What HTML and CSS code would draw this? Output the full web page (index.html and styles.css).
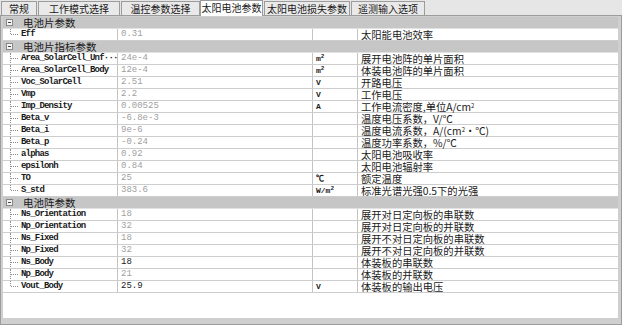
FILE: index.html
```html
<!DOCTYPE html>
<html lang="zh-CN">
<head>
  <meta charset="UTF-8" />
  <title>太阳电池参数</title>
  <link rel="stylesheet" href="styles.css">
</head>
<body>
  <div class="tabs">
    <div class="tab t1">常规</div>
    <div class="tab t2">工作模式选择</div>
    <div class="tab t3">温控参数选择</div>
    <div class="tab t4 active">太阳电池参数</div>
    <div class="tab t5">太阳电池损失参数</div>
    <div class="tab t6">遥测输入选项</div>
  </div>

  <div class="panel">
    <div class="grid">
      <div class="cat"><span class="toggle"></span>电池片参数</div>
      <div class="row last"><div class="name">Eff</div><div class="val">0.31</div><div class="unit"></div><div class="desc">太阳能电池效率</div></div>

      <div class="cat"><span class="toggle"></span>电池片指标参数</div>
      <div class="row"><div class="name">Area_SolarCell_Unf···</div><div class="val">24e-4</div><div class="unit">m<sup>2</sup></div><div class="desc">展开电池阵的单片面积</div></div>
      <div class="row"><div class="name">Area_SolarCell_Body</div><div class="val">12e-4</div><div class="unit">m<sup>2</sup></div><div class="desc">体装电池阵的单片面积</div></div>
      <div class="row"><div class="name">Voc_SolarCell</div><div class="val">2.51</div><div class="unit">V</div><div class="desc">开路电压</div></div>
      <div class="row"><div class="name">Vmp</div><div class="val">2.2</div><div class="unit">V</div><div class="desc">工作电压</div></div>
      <div class="row"><div class="name">Imp_Density</div><div class="val">0.00525</div><div class="unit">A</div><div class="desc">工作电流密度,单位A/cm<sup>2</sup></div></div>
      <div class="row"><div class="name">Beta_v</div><div class="val">-6.8e-3</div><div class="unit"></div><div class="desc">温度电压系数，V/℃</div></div>
      <div class="row"><div class="name">Beta_i</div><div class="val">9e-6</div><div class="unit"></div><div class="desc">温度电流系数，A/(cm<sup>2</sup>•℃)</div></div>
      <div class="row"><div class="name">Beta_p</div><div class="val">-0.24</div><div class="unit"></div><div class="desc">温度功率系数，%/℃</div></div>
      <div class="row"><div class="name">alphas</div><div class="val">0.92</div><div class="unit"></div><div class="desc">太阳电池吸收率</div></div>
      <div class="row"><div class="name">epsilonh</div><div class="val">0.84</div><div class="unit"></div><div class="desc">太阳电池辐射率</div></div>
      <div class="row"><div class="name">TO</div><div class="val">25</div><div class="unit">℃</div><div class="desc">额定温度</div></div>
      <div class="row last"><div class="name">S_std</div><div class="val">383.6</div><div class="unit">W/m<sup>2</sup></div><div class="desc">标准光谱光强0.5下的光强</div></div>

      <div class="cat"><span class="toggle"></span>电池阵参数</div>
      <div class="row"><div class="name">Ns_Orientation</div><div class="val">18</div><div class="unit"></div><div class="desc">展开对日定向板的串联数</div></div>
      <div class="row"><div class="name">Np_Orientation</div><div class="val">32</div><div class="unit"></div><div class="desc">展开对日定向板的并联数</div></div>
      <div class="row"><div class="name">Ns_Fixed</div><div class="val">18</div><div class="unit"></div><div class="desc">展开不对日定向板的串联数</div></div>
      <div class="row"><div class="name">Np_Fixed</div><div class="val">32</div><div class="unit"></div><div class="desc">展开不对日定向板的并联数</div></div>
      <div class="row"><div class="name">Ns_Body</div><div class="val edit">18</div><div class="unit"></div><div class="desc">体装板的串联数</div></div>
      <div class="row"><div class="name">Np_Body</div><div class="val">21</div><div class="unit"></div><div class="desc">体装板的并联数</div></div>
      <div class="row last"><div class="name">Vout_Body</div><div class="val edit">25.9</div><div class="unit">V</div><div class="desc">体装板的输出电压</div></div>
    </div>
  </div>
</body>
</html>
```

FILE: styles.css
```css
body {
  margin: 0;
  width: 622px;
  height: 325px;
  overflow: hidden;
  background: #e6e6e6;
  font-family: "Noto Sans CJK SC", sans-serif;
  color: #1a1a1a;
}

/* tab strip */
.tabs {
  display: flex;
  align-items: flex-end;
  height: 15px;
  padding-left: 1px;
}

.tab {
  box-sizing: border-box;
  height: 14px;
  margin-right: 1px;
  border: 1px solid #9c9c9c;
  border-bottom: none;
  background: #e9e9e9;
  font-size: 10px;
  line-height: 13px;
  text-align: center;
  white-space: nowrap;
}

.t1 { width: 36px; }
.t2 { width: 82px; }
.t3 { width: 79px; }
.t4 { width: 63px; }
.t5 { width: 86px; }
.t6 { width: 74px; }

.tab.active {
  height: 16px;
  margin-bottom: -1px;
  margin-left: -1px;
  background: #fff;
  position: relative;
  z-index: 1;
}

/* panel with the property grid */
.panel {
  box-sizing: border-box;
  height: 310px;
  border: 1px solid #9c9c9c;
  background: #cfcfcf;
  padding: 1px 3px 6px 2px;
}

.grid {
  height: 100%;
  background: #fff;
}

.cat {
  height: 11px;
  line-height: 11px;
  border-bottom: 1px solid #e2e2e2;
  background: #c6c6c6;
  font-size: 10.5px;
  display: flex;
  align-items: center;
}

.toggle {
  box-sizing: border-box;
  width: 7px;
  height: 7px;
  margin: 0 10px 0 3px;
  border: 1px solid #8a8a8a;
  background: #f4f4f4;
  position: relative;
}

.toggle::after {
  content: "";
  position: absolute;
  left: 1px;
  right: 1px;
  top: 2px;
  border-top: 1px solid #444;
}

.row {
  display: grid;
  grid-template-columns: 114px 195px 45px 1fr;
  height: 11px;
  line-height: 11px;
  border-bottom: 1px solid #cdcdcd;
}

.row > div {
  white-space: nowrap;
}

.name {
  position: relative;
  overflow: hidden;
  padding-left: 18px;
  font-family: "Liberation Mono", monospace;
  font-weight: bold;
  font-size: 9px;
  letter-spacing: -0.8px;
}

.name::before {
  content: "";
  position: absolute;
  left: 7px;
  top: 0;
  bottom: -1px;
  border-left: 1px dotted #8c8c8c;
}

.name::after {
  content: "";
  position: absolute;
  left: 8px;
  top: 5px;
  width: 7px;
  border-top: 1px dotted #8c8c8c;
}

.row.last .name::before {
  bottom: 6px;
}

.val,
.unit,
.desc {
  border-left: 1px solid #c4c4c4;
}

.val {
  padding-left: 3px;
  font-family: "Liberation Mono", monospace;
  font-size: 9px;
  color: #a0a0a0;
}

.val.edit {
  color: #1a1a1a;
}

.unit {
  padding-left: 3px;
  font-family: "Liberation Mono", monospace;
  font-weight: bold;
  font-size: 8px;
}

.desc {
  padding-left: 3px;
  font-size: 10.3px;
}

sup {
  font-size: 6px;
  line-height: 0;
  vertical-align: 3px;
}
```
